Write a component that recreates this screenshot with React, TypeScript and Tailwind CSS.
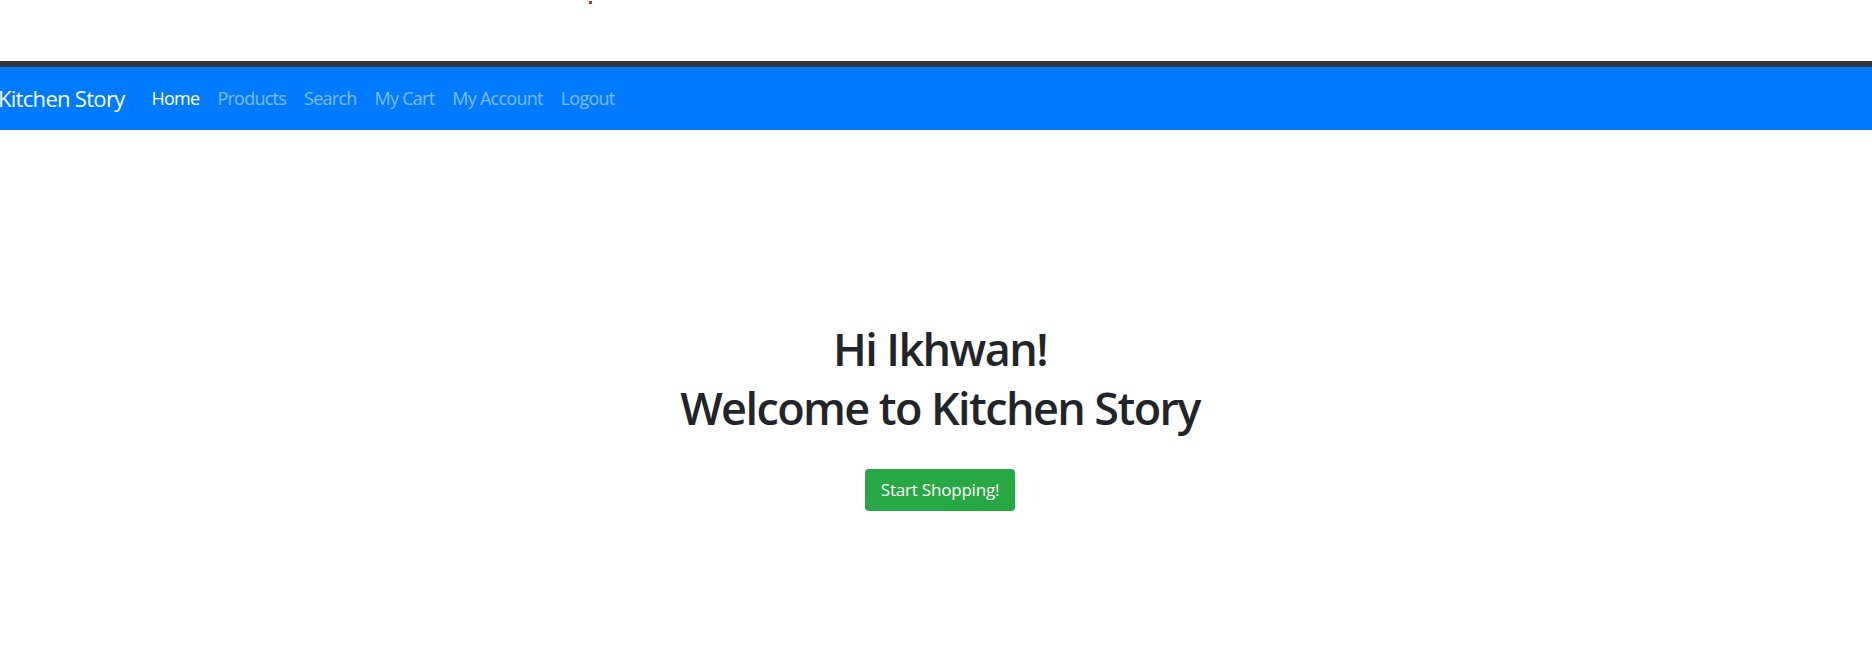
export default function App() {
  return (
    <div className="min-h-[657px] bg-white font-['Open_Sans',sans-serif]">
      <div className="relative h-[61px]">
        <span className="absolute left-[589px] top-[1px] w-[3px] h-[3px] bg-[#e8211d]"></span>
      </div>
      <nav className="h-[69px] border-t-[6px] border-[#35363a] bg-[#007bff] flex items-center">
        <span className="text-white text-[22px] -ml-[2px] tracking-[-0.7px]">Kitchen Story</span>
        <ul className="flex items-center ml-[27px] gap-[18px] text-[18px] tracking-[-0.75px]">
          <li className="text-white">Home</li>
          <li className="text-white/50">Products</li>
          <li className="text-white/50">Search</li>
          <li className="text-white/50">My Cart</li>
          <li className="text-white/50">My Account</li>
          <li className="text-white/50">Logout</li>
        </ul>
      </nav>
      <main className="flex flex-col items-center pl-[8px] pt-[189px]">
        <h1 className="text-center text-[#212529] text-[45px] leading-[59px] font-semibold tracking-[-1.6px]">
          Hi Ikhwan!
          <br />
          Welcome to Kitchen Story
        </h1>
        <button className="mt-[32px] w-[150px] h-[42px] rounded-[4px] bg-[#28a745] text-white text-[17px] tracking-[-0.2px]">
          Start Shopping!
        </button>
      </main>
    </div>
  );
}
